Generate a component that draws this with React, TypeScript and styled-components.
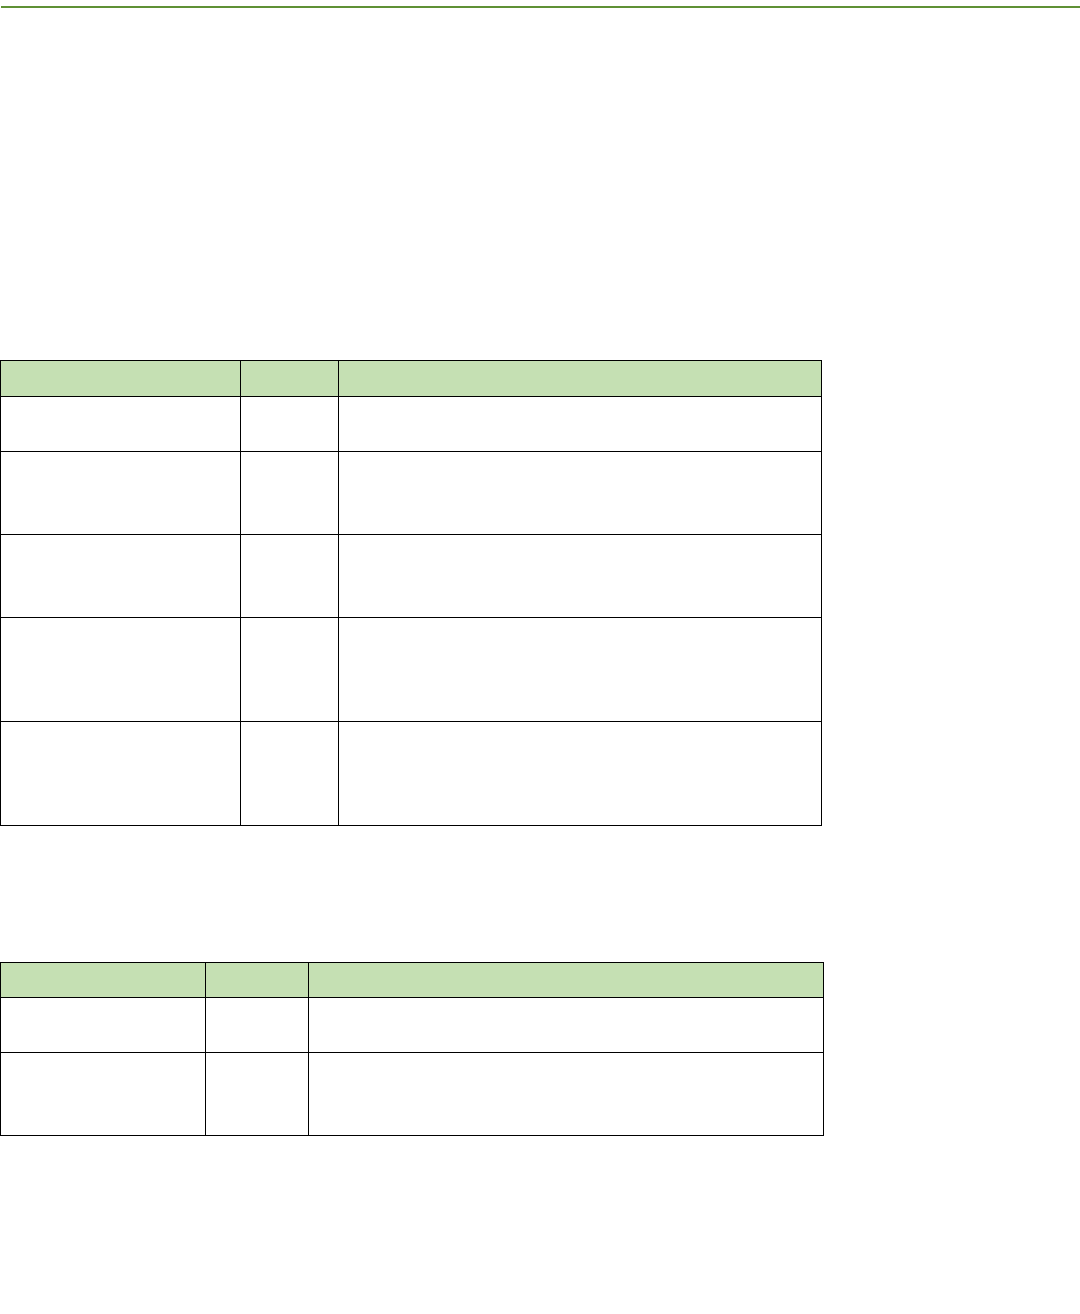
import React from 'react';
import styled, { createGlobalStyle } from 'styled-components';

const GlobalStyle = createGlobalStyle`
  html, body {
    margin: 0;
    padding: 0;
    background: #ffffff;
    font-family: "Liberation Sans", Arial, sans-serif;
  }
`;

interface TableSpec {
  columns: number[];
  rows: number[];
}

const Page = styled.div`
  display: flex;
  flex-direction: column;
  padding-top: 6px;
  min-height: 1314px;
  box-sizing: border-box;
`;

const Rule = styled.div`
  height: 2px;
  margin-left: 1px;
  background: #5f9135;
`;

const Grid = styled.div<{ $top: number }>`
  display: grid;
  gap: 1px;
  padding: 1px;
  background: #000000;
  align-self: flex-start;
  margin-top: ${({ $top }) => $top}px;
`;

const HeaderCell = styled.div`
  background: #c5e0b3;
`;

const Cell = styled.div`
  background: #ffffff;
`;

const tables: { top: number; spec: TableSpec }[] = [
  { top: 352, spec: { columns: [239, 97, 482], rows: [35, 54, 82, 82, 103, 103] } },
  { top: 136, spec: { columns: [204, 102, 514], rows: [34, 54, 82] } },
];

const EmptyTable: React.FC<{ top: number; spec: TableSpec }> = ({ top, spec }) => {
  const { columns, rows } = spec;
  return (
    <Grid
      $top={top}
      style={{
        gridTemplateColumns: columns.map((c) => `${c}px`).join(' '),
        gridTemplateRows: rows.map((r) => `${r}px`).join(' '),
      }}
    >
      {rows.map((_, r) =>
        columns.map((_, c) =>
          r === 0 ? <HeaderCell key={`${r}-${c}`} /> : <Cell key={`${r}-${c}`} />
        )
      )}
    </Grid>
  );
};

const App: React.FC = () => {
  return (
    <>
      <GlobalStyle />
      <Page>
        <Rule />
        {tables.map((t, i) => (
          <EmptyTable key={i} top={t.top} spec={t.spec} />
        ))}
      </Page>
    </>
  );
};

export default App;
